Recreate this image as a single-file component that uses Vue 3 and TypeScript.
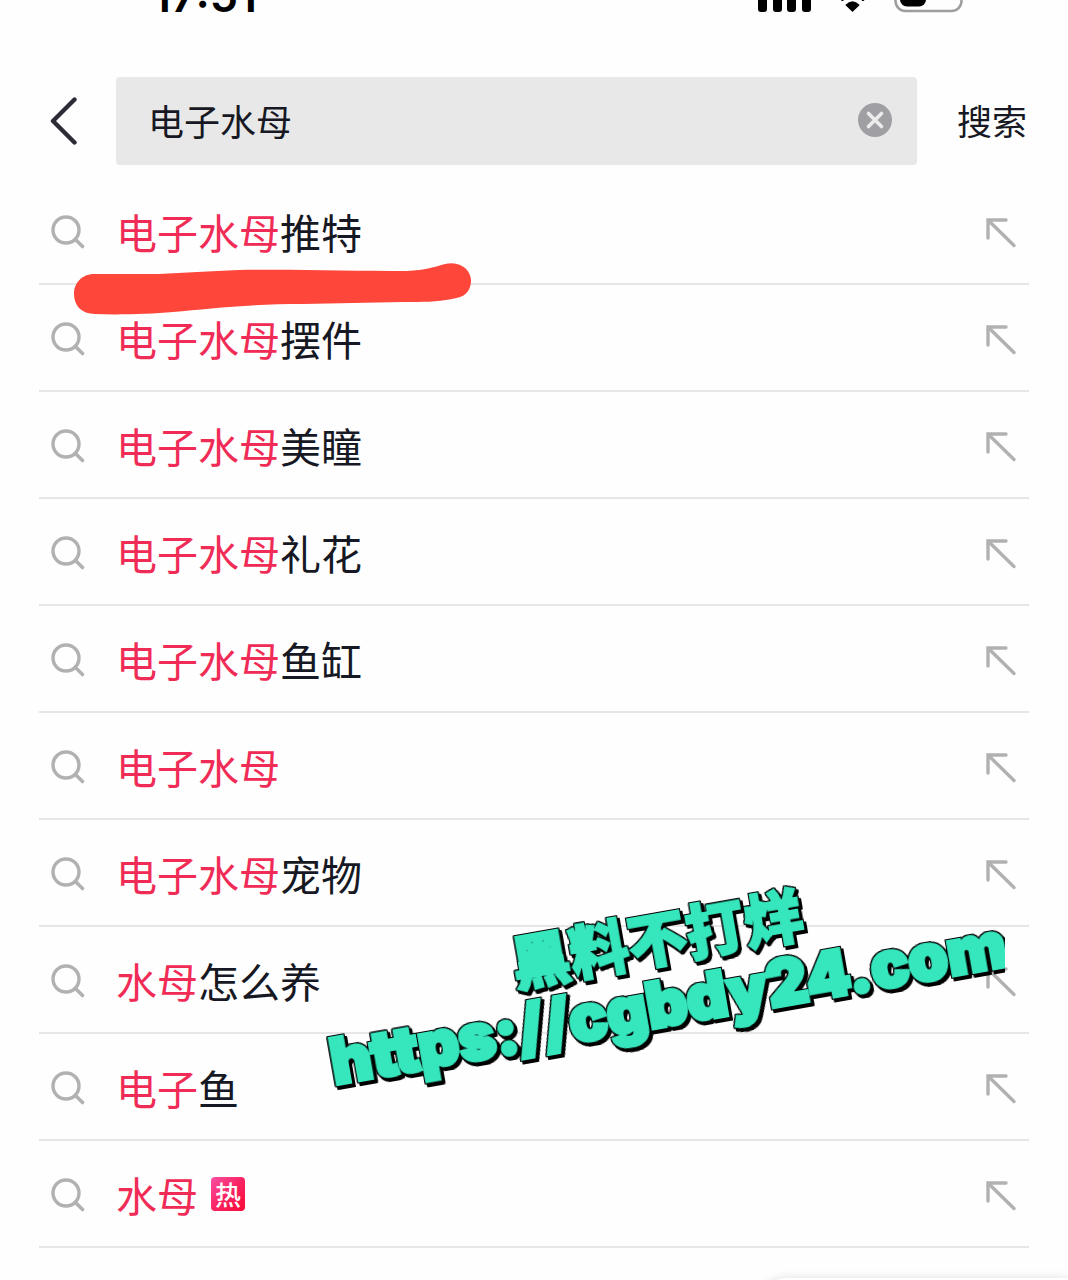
<script setup lang="ts">
import { ref } from 'vue'

interface Suggestion {
  match: string
  rest: string
  hot?: boolean
}

const query = ref('电子水母')

const suggestions: Suggestion[] = [
  { match: '电子水母', rest: '推特' },
  { match: '电子水母', rest: '摆件' },
  { match: '电子水母', rest: '美瞳' },
  { match: '电子水母', rest: '礼花' },
  { match: '电子水母', rest: '鱼缸' },
  { match: '电子水母', rest: '' },
  { match: '电子水母', rest: '宠物' },
  { match: '水母', rest: '怎么养' },
  { match: '电子', rest: '鱼' },
  { match: '水母', rest: '', hot: true },
]
</script>

<template>
  <div class="page">
    <div class="status">
      <span class="time">17:51</span>
      <svg class="indicators" width="212" height="14" viewBox="0 0 212 14" aria-hidden="true">
        <rect x="2" y="-14" width="9" height="26" rx="3" />
        <rect x="17" y="-14" width="9" height="26" rx="3" />
        <rect x="31" y="-14" width="9" height="26" rx="3" />
        <rect x="46" y="-14" width="9" height="26" rx="3" />
        <path d="M96.500 12 L89.300 4.900 Q96.500 -2.500 103.700 4.900 Z" />
        <path d="M86.500 -0.500 Q96.500 -15 107 -0.500" fill="none" stroke="#000" stroke-width="3" stroke-linecap="round" />
        <rect x="139.500" y="-20" width="66" height="31" rx="10" fill="none" stroke="#9d9d9d" stroke-width="2.500" />
        <rect x="144" y="-16" width="26" height="22.500" rx="7" />
        <path d="M209 -10 Q213 -5 209 0.500 Z" fill="#9d9d9d" />
      </svg>
    </div>

    <form class="search" @submit.prevent>
      <button class="back" type="button" aria-label="返回">
        <svg width="28" height="48" viewBox="0 0 28 48">
          <path d="M24.500 2.500 L3 24 L24.500 45.500" fill="none" stroke="#2b2c36" stroke-width="4.400" stroke-linecap="round" stroke-linejoin="round" />
        </svg>
      </button>
      <div class="field">
        <input v-model="query" type="text" aria-label="搜索内容" />
        <button class="clear" type="button" aria-label="清除" @click="query = ''">
          <svg width="34" height="34" viewBox="0 0 34 34">
            <circle cx="17" cy="17" r="17" fill="#a09fa3" />
            <path d="M10.500 10.500 L23.500 23.500 M23.500 10.500 L10.500 23.500" stroke="#ececec" stroke-width="3.600" stroke-linecap="round" />
          </svg>
        </button>
      </div>
      <button class="submit" type="submit">搜索</button>
    </form>

    <ul class="list">
      <li v-for="item in suggestions" :key="item.match + item.rest + (item.hot ? '热' : '')">
        <button class="entry" type="button">
          <svg class="lens" width="36" height="36" viewBox="0 0 36 36" aria-hidden="true">
            <circle cx="15" cy="15" r="13" fill="none" stroke="#b1b1b1" stroke-width="3.400" />
            <path d="M24.500 24.500 L31.500 31.500" stroke="#b1b1b1" stroke-width="3.600" stroke-linecap="round" />
          </svg>
          <span class="words"><em>{{ item.match }}</em>{{ item.rest }}</span>
          <span v-if="item.hot" class="hot">热</span>
        </button>
        <button class="fill" type="button" aria-label="填入搜索框">
          <svg width="32" height="32" viewBox="0 0 32 32">
            <path d="M21 3 H3 V21" fill="none" stroke="#b1b1b1" stroke-width="3.400" stroke-linecap="round" stroke-linejoin="miter" />
            <path d="M4 4 L29 28.500" stroke="#b1b1b1" stroke-width="3.400" stroke-linecap="round" />
          </svg>
        </button>
      </li>
    </ul>

    <div class="dock"><div class="panel"></div></div>

    <svg class="marker" width="400" height="54" viewBox="0 0 400 54" aria-hidden="true">
      <path
        d="M21 12 L86 12 C112 11 136 9 166 8 C220 7 280 9 334 9 C352 8 362 5 372 2 C388 -2 399 9 398 20 C397 30 392 35 379 37 C362 40 352 40 330 40 L230 42 C175 42 135 47 100 50 C76 52 46 53 22 52 C8 52 1 43 1 32 C1 21 9 12 21 12 Z"
        fill="#fe463a"
      />
    </svg>

    <div class="stamp">
      <div class="stamp-text">
        <div class="stamp-name">黑料不打烊</div>
        <div class="stamp-url">https://cgbdy24.com</div>
      </div>
    </div>
  </div>
</template>

<style>
body {
  margin: 0;
  background: #fefefe;
}
</style>

<style scoped>
.page {
  position: relative;
  min-height: 100vh;
  overflow: hidden;
  background: #fefefe;
  color: #161823;
  font-family: 'Noto Sans CJK SC', 'Noto Sans', sans-serif;
}
button {
  padding: 0;
  border: 0;
  background: none;
  color: inherit;
  font: inherit;
}
svg {
  display: block;
}
.status {
  display: flex;
  justify-content: space-between;
  align-items: flex-end;
  height: 14px;
  padding: 0 100px 0 152px;
  overflow: hidden;
  color: #000;
}
.time {
  font: 600 45px/36px Inter, sans-serif;
}
.search {
  display: flex;
  align-items: center;
  height: 88px;
  margin: 63px 41px 0 50px;
}
.back {
  width: 66px;
}
.field {
  display: flex;
  flex: 1;
  align-items: center;
  height: 88px;
  min-width: 0;
  padding: 0 25px 2px 32px;
  box-sizing: border-box;
  border-radius: 4px;
  background: #e8e8e8;
}
.field input {
  flex: 1;
  min-width: 0;
  height: 60px;
  padding: 0;
  border: 0;
  outline: 0;
  background: none;
  color: inherit;
  font: inherit;
  font-size: 36px;
}
.submit {
  margin-left: 40px;
  padding-bottom: 4px;
  font-size: 35px;
}
.list {
  margin: 13px 39px 0;
  padding: 0;
  list-style: none;
}
.list li {
  display: flex;
  align-items: center;
  height: 107px;
  box-sizing: border-box;
  padding: 4px 12px 0;
  border-bottom: 2px solid #e6e6e6;
}
.entry {
  display: flex;
  flex: 1;
  align-items: center;
  text-align: left;
}
.words {
  margin-left: 29px;
  padding-bottom: 4px;
  font-size: 41px;
  line-height: 60px;
}
.words em {
  color: #f02c56;
  font-style: normal;
}
.hot {
  width: 34px;
  height: 34px;
  margin: 0 0 4px 13px;
  border-radius: 4px;
  background: linear-gradient(135deg, #f850a4, #fa2463 50%, #f80a38);
  color: #fff;
  font-size: 26px;
  font-weight: 500;
  line-height: 34px;
  text-align: center;
}
.dock {
  height: 33px;
  overflow: hidden;
}
.panel {
  width: 320px;
  height: 80px;
  margin: 30px 0 0 auto;
  border-radius: 40px 0 0 40px;
  background: #fff;
  box-shadow: 0 0 10px rgba(0, 0, 0, 0.12);
}
.marker {
  position: absolute;
  top: 262px;
  left: 73px;
}
.stamp {
  position: absolute;
  top: 870px;
  left: 300px;
  width: 705px;
  height: 240px;
  overflow: hidden;
  pointer-events: none;
}
.stamp-text {
  width: 724px;
  margin-top: 31px;
  color: #36e6bd;
  font-weight: 900;
  text-align: center;
  white-space: nowrap;
  transform: rotate(-10deg);
  filter: drop-shadow(1px 0 0 #000) drop-shadow(-1px 0 0 #000) drop-shadow(0 1px 0 #000)
    drop-shadow(0 -1px 0 #000) drop-shadow(2px 3px 0 #000);
}
.stamp-name {
  font-size: 59px;
  line-height: 70px;
  -webkit-text-stroke: 2px #36e6bd;
}
.stamp-url {
  font-family: Inter, sans-serif;
  font-size: 63px;
  line-height: 64px;
  -webkit-text-stroke: 4px #36e6bd;
}
</style>
